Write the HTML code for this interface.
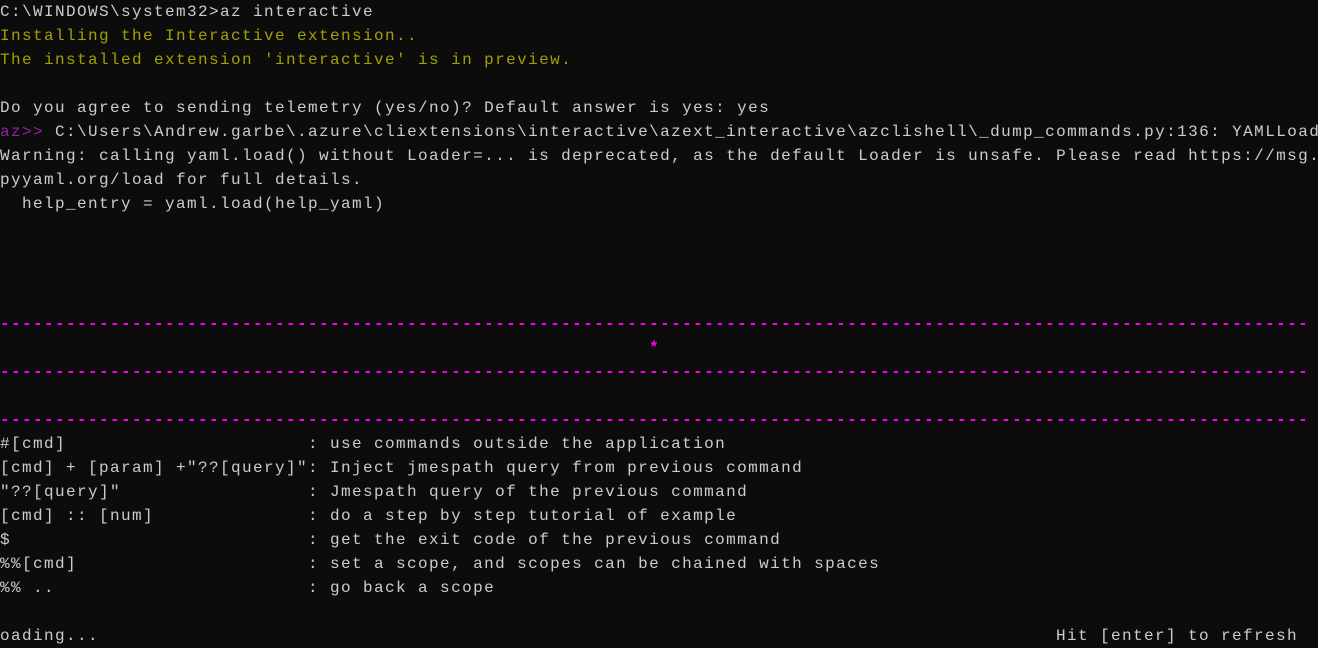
<!DOCTYPE html>
<html><head><meta charset="utf-8"><style>
html,body{margin:0;padding:0;background:#0c0c0c;width:1318px;height:646px;overflow:hidden}
pre{margin:0;font-family:"Liberation Mono",monospace;font-size:16px;letter-spacing:1.4px;line-height:24px;color:#cccccc;white-space:pre;position:absolute;left:0;top:0}
.y{color:#a0a000}.p{color:#9a1fa8}.m{color:#ff00ff;font-weight:bold}
.r{position:absolute;left:1056px;top:624px}
</style></head><body>
<pre>C:\WINDOWS\system32&gt;az interactive
<span class="y">Installing the Interactive extension..</span>
<span class="y">The installed extension 'interactive' is in preview.</span>

Do you agree to sending telemetry (yes/no)? Default answer is yes: yes
<span class="p">az&gt;&gt;</span> C:\Users\Andrew.garbe\.azure\cliextensions\interactive\azext_interactive\azclishell\_dump_commands.py:136: YAMLLoad
Warning: calling yaml.load() without Loader=... is deprecated, as the default Loader is unsafe. Please read https://msg.
pyyaml.org/load for full details.
  help_entry = yaml.load(help_yaml)




<span class="m">-----------------------------------------------------------------------------------------------------------------------</span>
<span class="m">                                                           *</span>
<span class="m">-----------------------------------------------------------------------------------------------------------------------</span>

<span class="m">-----------------------------------------------------------------------------------------------------------------------</span>
#[cmd]                      : use commands outside the application
[cmd] + [param] +"??[query]": Inject jmespath query from previous command
"??[query]"                 : Jmespath query of the previous command
[cmd] :: [num]              : do a step by step tutorial of example
$                           : get the exit code of the previous command
%%[cmd]                     : set a scope, and scopes can be chained with spaces
%% ..                       : go back a scope

oading...</pre>
<pre class="r">Hit [enter] to refresh</pre>
</body></html>
